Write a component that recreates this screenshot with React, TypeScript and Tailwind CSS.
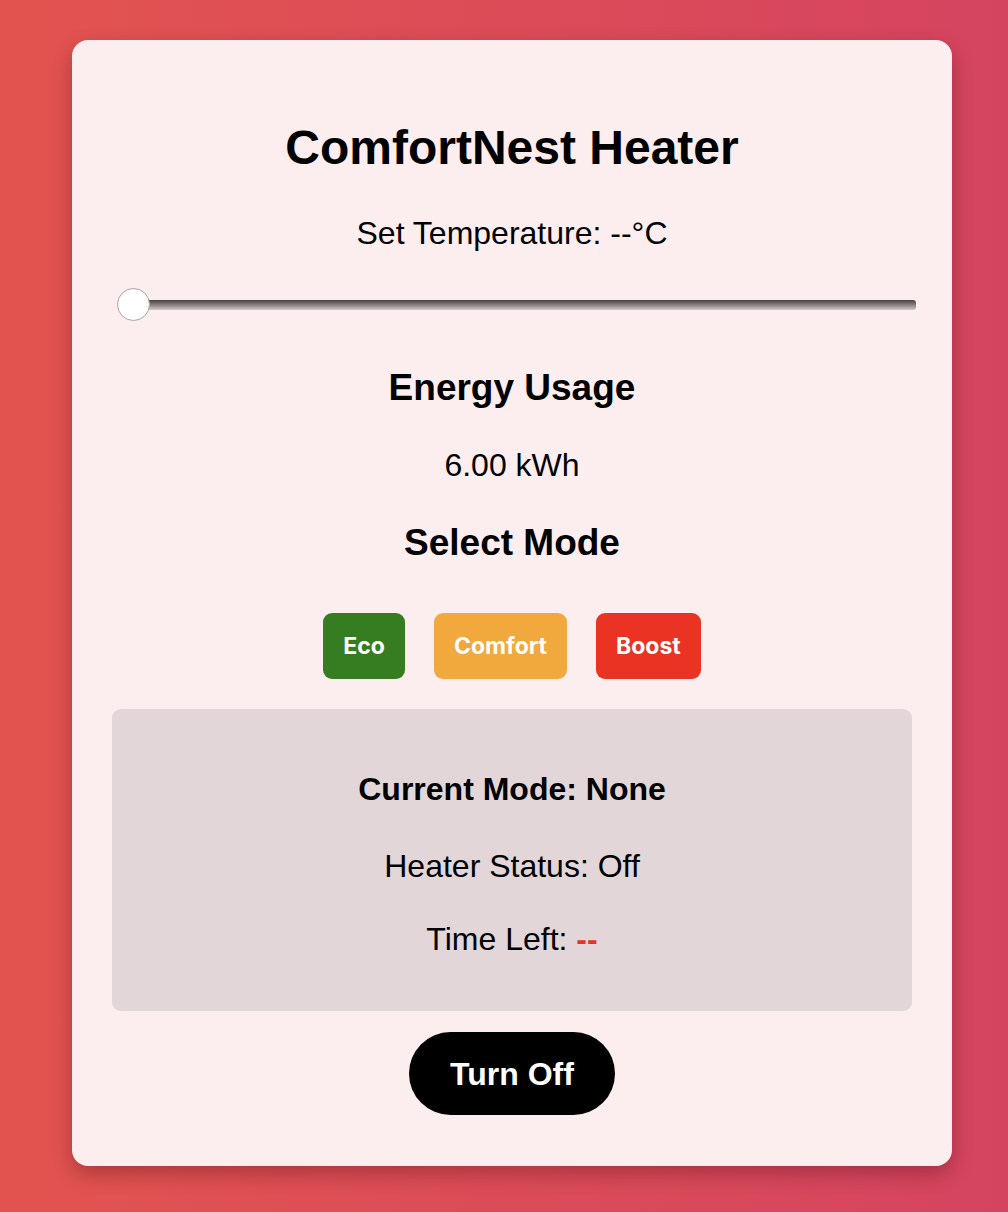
import React, { useState } from 'react';

type Mode = 'Eco' | 'Comfort' | 'Boost';

const modes: { name: Mode; cls: string }[] = [
  { name: 'Eco', cls: 'bg-[#367d22]' },
  { name: 'Comfort', cls: 'bg-[#f1a93d]' },
  { name: 'Boost', cls: 'bg-[#ea3323]' },
];

const App: React.FC = () => {
  const [mode, setMode] = useState<Mode | null>(null);
  const [on, setOn] = useState(false);

  return (
    <div className="min-h-screen w-full bg-gradient-to-r from-[#e2534f] to-[#d5445f] pt-[40px] pb-[46px] pl-[16px] font-['Liberation_Sans',Arial,sans-serif] text-black">
      <div className="mx-auto flex w-[880px] flex-col items-center rounded-[16px] bg-[#fcedef] px-[40px] pt-[80px] pb-[51px] shadow-[0_8px_20px_rgba(60,0,10,0.3)]">
        <h1 className="text-[48px] font-bold leading-[56px]">ComfortNest Heater</h1>

        <p className="mt-[39px] text-[32px] leading-[36px]">Set Temperature: --°C</p>

        {/* slider */}
        <div className="relative mt-[37px] ml-[5px] h-[33px] w-[799px] self-start">
          <div className="absolute left-[16px] right-0 top-[12px] h-[10px] rounded-r-[3px] bg-gradient-to-b from-[#474142] via-[#8a8082] to-[#d3c7c9]" />
          <div className="absolute left-0 top-0 h-[33px] w-[33px] rounded-full border border-[#a9a3a4] bg-white" />
        </div>

        <h2 className="mt-[46px] text-[37px] font-bold leading-[42px]">Energy Usage</h2>
        <p className="mt-[38px] text-[32px] leading-[36px]">6.00 kWh</p>

        <h2 className="mt-[39px] text-[37px] font-bold leading-[42px]">Select Mode</h2>

        <div className="mt-[49px] flex gap-[29px]">
          {modes.map((m) => (
            <button
              key={m.name}
              onClick={() => { setMode(m.name); setOn(true); }}
              className={`h-[66px] rounded-[9px] px-[20px] font-['Inter',sans-serif] text-[23px] font-bold text-white ${m.cls}`}
            >
              {m.name}
            </button>
          ))}
        </div>

        <div className="mt-[30px] flex h-[302px] w-full flex-col items-center rounded-[9px] bg-[#e2d6d9] pt-[62px]">
          <p className="text-[32px] font-bold leading-[36px]">Current Mode: {mode ?? 'None'}</p>
          <p className="mt-[41px] text-[32px] leading-[36px]">Heater Status: {on ? 'On' : 'Off'}</p>
          <p className="mt-[37px] text-[32px] leading-[36px]">
            Time Left: <span className="font-bold text-[#ea3323]">--</span>
          </p>
        </div>

        <button
          onClick={() => { setOn(false); setMode(null); }}
          className="mt-[21px] h-[83px] rounded-full bg-black px-[41px] text-[32px] font-bold text-white"
        >
          Turn Off
        </button>
      </div>
    </div>
  );
};

export default App;
